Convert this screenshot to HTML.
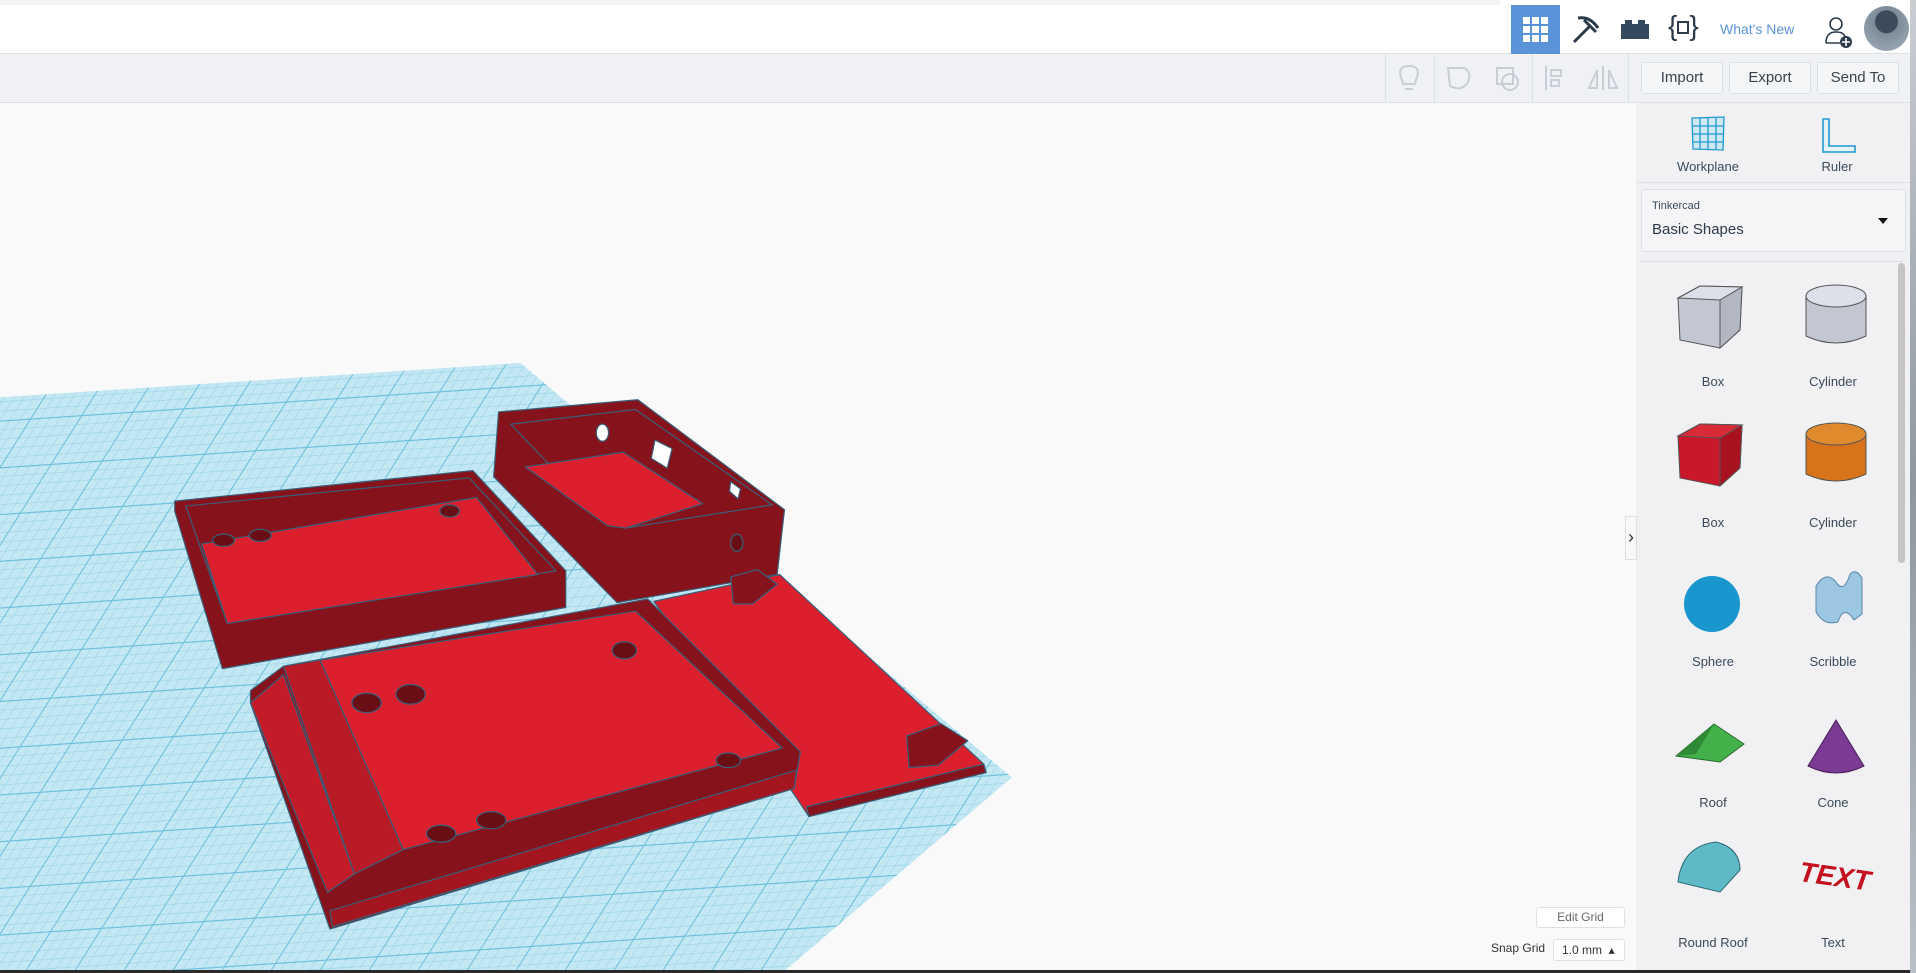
<!DOCTYPE html>
<html><head><meta charset="utf-8"><style>
*{margin:0;padding:0;box-sizing:border-box}
body{width:1916px;height:973px;overflow:hidden;background:#f9f9f9;font-family:"Liberation Sans",sans-serif;position:relative;color:#333}
.abs{position:absolute}
#top{left:0;top:0;width:1910px;height:54px;background:#fff;border-bottom:1px solid #dde1e6}
#strip{left:0;top:0;width:1500px;height:5px;background:#f3f3f3}
#tb{left:0;top:54px;width:1910px;height:49px;background:#f0f1f4;border-bottom:1px solid #dde1e6}
.btn{top:62px;height:32px;width:82px;border:1px solid #dcdfe4;border-radius:3px;background:#f4f5f7;font-size:15px;color:#3a3f4a;text-align:center;line-height:30px}
.vd{width:1px;background:#dde1e6}
#side{left:1636px;top:103px;width:274px;height:867px;background:#f1f1f3}
.lbl{font-size:13px;color:#3a4a5c;text-align:center;width:120px}
#rt{left:1910px;top:0;width:6px;height:973px;background:linear-gradient(#c9ced3,#8f979f,#b9c0c6)}
</style></head><body>
<svg class="abs" style="left:0;top:0" width="1916" height="973" viewBox="0 0 1568 796" preserveAspectRatio="none">
<defs>
<pattern id="g" width="40" height="40" patternUnits="userSpaceOnUse" patternTransform="skewX(-35) rotate(-4)">
<rect width="40" height="40" fill="#c4e8f3"/><path d="M0 8H40M0 16H40M0 24H40M0 32H40M8 0V40M16 0V40M24 0V40M32 0V40" stroke="#9dd6e9" stroke-width="0.6"/><path d="M0 0.5H40M0.5 0V40" stroke="#6fc0dc" stroke-width="1"/></pattern>
</defs>
<polygon points="0,325 426,297 828,636 640,796 0,796" fill="url(#g)"/>
<g stroke="#3b5e78" stroke-width="1" stroke-linejoin="round">
<polygon points="143,410 387,385 463,467 463,497 182,547 143,418" fill="#86121c"/>
<polygon points="152,414 384,391 455,467 186,510" fill="#86121c"/>
<polygon points="165,445 390,407 440,470 186,510" fill="#dc1f2d"/>
<ellipse cx="183" cy="442" rx="9" ry="5" fill="#6a0e16"/><ellipse cx="213" cy="438" rx="9" ry="5" fill="#6a0e16"/><ellipse cx="368" cy="418" rx="8" ry="5" fill="#6a0e16"/>
<polygon points="408,337 522,327 642,417 636,470 505,493 404,390" fill="#86121c"/>
<polygon points="418,347 520,335 632,413 512,432 497,430" fill="#86121c"/>
<polygon points="430,382 510,370 575,412 512,432 497,430" fill="#dc1f2d"/>
<polygon points="536,360 550,367 546,383 533,375" fill="#fff"/>
<polygon points="598,394 606,400 604,408 597,402" fill="#fff"/>
<ellipse cx="493" cy="354" rx="5" ry="7" fill="#fff"/><ellipse cx="603" cy="444" rx="5" ry="7" fill="#6a0e16"/>
<polygon points="535,492 638,470 805,625 807,632 662,668 650,650" fill="#dc1f2d"/>
<polygon points="660,660 805,625 807,632 662,668" fill="#86121c"/>
<polygon points="205,565 232,545 530,490 655,615 650,645 270,760 205,575" fill="#86121c"/>
<polygon points="232,545 262,540 330,695 290,715" fill="#b81a26"/>
<polygon points="262,540 520,500 640,612 330,695" fill="#dc1f2d"/>
<polygon points="205,575 232,552 290,715 268,730" fill="#c41b28"/>
<polygon points="270,745 652,630 650,645 272,758" fill="#a3151f"/>
<ellipse cx="300" cy="575" rx="12" ry="8" fill="#6a0e16"/><ellipse cx="336" cy="568" rx="12" ry="8" fill="#6a0e16"/>
<ellipse cx="511" cy="532" rx="10" ry="7" fill="#6a0e16"/><ellipse cx="596" cy="622" rx="10" ry="6" fill="#6a0e16"/>
<ellipse cx="361" cy="682" rx="12" ry="7" fill="#6a0e16"/><ellipse cx="402" cy="671" rx="12" ry="7" fill="#6a0e16"/>
<polygon points="598,472 620,466 636,478 616,494 600,494" fill="#86121c"/>
<polygon points="742,602 770,592 792,606 768,626 744,628" fill="#86121c"/>
</g>
</svg>
<div class="abs" id="top"></div><div class="abs" id="strip"></div>
<div class="abs" style="left:1511px;top:5px;width:49px;height:49px;background:#5b93d9"></div>
<svg class="abs" style="left:1522px;top:16px" width="27" height="27"><g fill="#fff"><rect x="1" y="1" width="7" height="7"/><rect x="10" y="1" width="7" height="7"/><rect x="19" y="1" width="7" height="7"/><rect x="1" y="10" width="7" height="7"/><rect x="10" y="10" width="7" height="7"/><rect x="19" y="10" width="7" height="7"/><rect x="1" y="19" width="7" height="7"/><rect x="10" y="19" width="7" height="7"/><rect x="19" y="19" width="7" height="7"/></g></svg>
<svg class="abs" style="left:1570px;top:14px" width="32" height="32"><path d="M4 28 L20 12 M8 4 Q20 2 28 14 M14 6 L26 18" stroke="#2c3a4a" stroke-width="3" fill="none"/></svg>
<svg class="abs" style="left:1620px;top:18px" width="30" height="22"><path d="M1 6h4v-4h7v4h6v-4h7v4h4v15h-28z" fill="#34495e"/></svg>
<div class="abs" style="left:1668px;top:10px;font-size:28px;color:#2c3a4a">{<span style="display:inline-block;width:12px;height:13px;border:2px solid #2c3a4a;vertical-align:middle"></span>}</div>
<div class="abs" style="left:1720px;top:21px;font-size:14px;color:#5b93d9">What's New</div>
<svg class="abs" style="left:1824px;top:15px" width="30" height="34"><circle cx="12" cy="9" r="6" fill="none" stroke="#2c3a4a" stroke-width="1.6"/><path d="M2 28 Q2 17 12 17 Q20 17 21 22 M2 28 h14" fill="none" stroke="#2c3a4a" stroke-width="1.6"/><circle cx="22" cy="27" r="6" fill="#2c3a4a"/><path d="M22 23v8M18 27h8" stroke="#fff" stroke-width="1.6"/></svg>
<div class="abs" style="left:1864px;top:6px;width:45px;height:45px;border-radius:50%;background:radial-gradient(circle at 50% 35%,#3d4a5a 30%,#7d8b99 32%,#a4b0bb)"></div>
<div class="abs" id="tb"></div>
<div class="abs vd" style="left:1385px;top:54px;height:49px"></div><div class="abs vd" style="left:1434px;top:54px;height:49px"></div><div class="abs vd" style="left:1532px;top:54px;height:49px"></div><div class="abs vd" style="left:1628px;top:54px;height:49px"></div>
<svg class="abs" style="left:1396px;top:62px" width="230" height="32" fill="none" stroke="#c7ced6" stroke-width="2"><path d="M9 27h8M6 18 Q0 4 13 4 Q26 4 20 18 L19 22h-12z"/><path d="M52 6h16 Q76 10 72 20 Q66 30 54 24 Z"/><rect x="101" y="6" width="16" height="16"/><circle cx="114" cy="20" r="8"/><path d="M150 4v24M155 8h10v6h-10zM155 18h8v6h-8z"/><path d="M207 4v24M201 26l-8 0 8-18zM213 26h8l-8-18z"/></svg>
<div class="abs btn" style="left:1641px">Import</div><div class="abs btn" style="left:1729px">Export</div><div class="abs btn" style="left:1817px">Send To</div>
<div class="abs" id="side"></div>
<svg class="abs" style="left:1691px;top:116px" width="34" height="36"><path d="M1 2 L33 1 L32 34 L2 33 Z M9 2v31M17 2v31M25 2v31M1 10h32M1 18h32M1 26h32" fill="#cfe7f3" stroke="#1f9ad0" stroke-width="1.3"/></svg>
<svg class="abs" style="left:1821px;top:118px" width="36" height="36"><path d="M2 1h6v27h26v6h-32z" fill="#e6f3fa" stroke="#1f9ad0" stroke-width="1.6"/></svg>
<div class="abs lbl" style="left:1648px;top:159px">Workplane</div><div class="abs lbl" style="left:1777px;top:159px">Ruler</div>
<div class="abs" style="left:1636px;top:182px;width:274px;height:1px;background:#dde1e6"></div>
<div class="abs" style="left:1641px;top:189px;width:265px;height:63px;background:#f5f5f7;border:1px solid #dde1e6;border-radius:3px"></div>
<div class="abs" style="left:1652px;top:200px;font-size:11px;color:#3a4a5c">Tinkercad</div>
<div class="abs" style="left:1652px;top:221px;font-size:15px;color:#2c3a4a">Basic Shapes</div>
<div class="abs" style="left:1878px;top:218px;border:5px solid transparent;border-top:6px solid #111"></div>
<div class="abs" style="left:1640px;top:261px;width:266px;height:1px;background:#dde1e6"></div>
<div class="abs" style="left:1898px;top:263px;width:7px;height:300px;border-radius:4px;background:#c4c4c4"></div>
<div class="abs" style="left:1625px;top:516px;width:12px;height:44px;background:#f8f8f8;border:1px solid #dde1e6;font-size:18px;line-height:40px;text-align:center">›</div>
<svg class="abs" style="left:1636px;top:270px" width="262" height="700">
<g stroke="#555" stroke-width="1">
<polygon points="42,28 64,16 106,17 104,60 84,78 44,70" fill="#c3c7d1"/><polygon points="42,28 64,16 106,17 84,30" fill="#dcdfe7"/><polygon points="84,30 106,17 104,60 84,78" fill="#b2b7c2"/>
<path d="M170 26 V66 Q200 80 230 66 V26 Z" fill="#c3c7d1"/><ellipse cx="200" cy="26" rx="30" ry="11" fill="#dde0e8"/>
<polygon points="42,166 64,154 106,155 104,198 84,216 44,208" fill="#c8182a"/><polygon points="42,166 64,154 106,155 84,168" fill="#d92a38"/><polygon points="84,168 106,155 104,198 84,216" fill="#a8121f"/>
<path d="M170 164 V204 Q200 218 230 204 V164 Z" fill="#d8731c"/><ellipse cx="200" cy="164" rx="30" ry="11" fill="#e08a2e"/>
</g>
<circle cx="76" cy="334" r="28" fill="#1a96cf"/>
<path d="M180 316 q10 -16 20 -4 q8 12 14 -8 q6 -6 12 4 v36 l-8 6 q-10 -16 -16 2 q-14 4 -22 -10z" fill="#9cc7e2" stroke="#5a86a6"/>
<polygon points="40,486 78,454 108,474 84,492" fill="#44b04a" stroke="#2a6a2e"/><polygon points="40,486 78,454 60,484" fill="#2f8a35"/>
<path d="M200 450 L228 496 Q200 510 172 496 Z" fill="#7b3b94" stroke="#4a2058"/>
<path d="M42 612 Q46 576 80 572 Q104 578 104 600 L84 622 Z" fill="#5fbac8" stroke="#2f6a74"/>
<text x="164" y="616" font-family="Liberation Sans" font-weight="bold" font-style="italic" font-size="28" fill="#c4101f" transform="rotate(8 200 600)">TEXT</text>
</svg>
<div class="abs lbl" style="left:1653px;top:374px">Box</div><div class="abs lbl" style="left:1773px;top:374px">Cylinder</div>
<div class="abs lbl" style="left:1653px;top:515px">Box</div><div class="abs lbl" style="left:1773px;top:515px">Cylinder</div>
<div class="abs lbl" style="left:1653px;top:654px">Sphere</div><div class="abs lbl" style="left:1773px;top:654px">Scribble</div>
<div class="abs lbl" style="left:1653px;top:795px">Roof</div><div class="abs lbl" style="left:1773px;top:795px">Cone</div>
<div class="abs lbl" style="left:1653px;top:935px">Round Roof</div><div class="abs lbl" style="left:1773px;top:935px">Text</div>
<div class="abs" style="left:1536px;top:907px;width:89px;height:21px;background:#fff;border:1px solid #dde1e6;border-radius:3px;font-size:12px;color:#666;text-align:center;line-height:19px">Edit Grid</div>
<div class="abs" style="left:1491px;top:941px;font-size:12px;color:#333">Snap Grid</div>
<div class="abs" style="left:1553px;top:939px;width:72px;height:22px;background:#fff;border:1px solid #dde1e6;border-radius:3px;font-size:12px;color:#333;line-height:20px;padding-left:8px">1.0 mm &nbsp;▴</div>
<div class="abs" style="left:0;top:970px;width:1916px;height:3px;background:#2a2a2a"></div>
<div class="abs" id="rt"></div>
</body></html>
